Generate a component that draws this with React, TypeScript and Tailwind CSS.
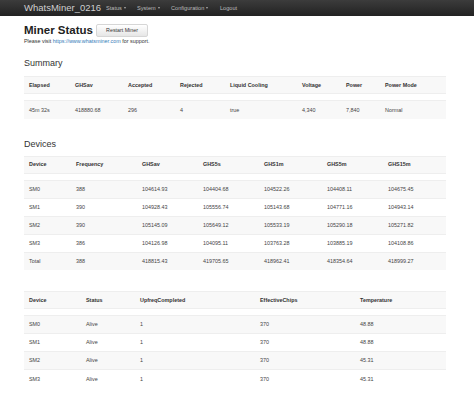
import React from "react";

type Table = {
  widths: number[];
  head: string[];
  rows: string[][];
};

const summary: Table = {
  widths: [46, 53, 52, 50, 72, 44, 39, 66],
  head: ["Elapsed", "GHSav", "Accepted", "Rejected", "Liquid Cooling", "Voltage", "Power", "Power Mode"],
  rows: [["45m 32s", "418880.68", "296", "4", "true", "4,340", "7,840", "Normal"]],
};

const devices: Table = {
  widths: [47, 66, 61, 61, 63, 61, 63],
  head: ["Device", "Frequency", "GHSav", "GHS5s", "GHS1m", "GHS5m", "GHS15m"],
  rows: [
    ["SM0", "388", "104614.93", "104404.68", "104522.26", "104408.11", "104675.45"],
    ["SM1", "390", "104928.43", "105556.74", "105143.68", "104771.16", "104943.14"],
    ["SM2", "390", "105145.09", "105649.12", "105533.19", "105290.18", "105271.82"],
    ["SM3", "386", "104126.98", "104095.11", "103763.28", "103885.19", "104108.86"],
    ["Total", "388", "418815.43", "419705.65", "418962.41", "418354.64", "418999.27"],
  ],
};

const chips: Table = {
  widths: [57, 54, 120, 100, 91],
  head: ["Device", "Status", "UpfreqCompleted", "EffectiveChips", "Temperature"],
  rows: [
    ["SM0", "Alive", "1", "370", "48.88"],
    ["SM1", "Alive", "1", "370", "48.88"],
    ["SM2", "Alive", "1", "370", "45.31"],
    ["SM3", "Alive", "1", "370", "45.31"],
  ],
};

function Caret() {
  return (
    <span className="ml-[2px] inline-block h-0 w-0 border-x-[1.5px] border-t-[2px] border-x-transparent border-t-[#aaa] align-middle" />
  );
}

function StripedTable({ table }: { table: Table }) {
  return (
    <table className="w-[422px] table-fixed border-collapse text-[5.4px] text-[#444]">
      <colgroup>
        {table.widths.map((w, i) => (
          <col key={i} style={{ width: w }} />
        ))}
      </colgroup>
      <tbody>
        <tr className="h-[17px] border-t border-[#eeeeee] bg-[#f8f8f8]">
          {table.head.map((h) => (
            <th key={h} className="pl-[5px] text-left font-bold text-[#333]">
              {h}
            </th>
          ))}
        </tr>
        <tr className="h-[7px] border-t border-[#eeeeee] bg-white">
          <td colSpan={table.head.length} />
        </tr>
        {table.rows.map((r, i) => (
          <tr
            key={i}
            className={`h-[18px] border-t border-[#eeeeee] ${i % 2 === 0 ? "bg-[#f8f8f8]" : "bg-white"}`}
          >
            {r.map((c, j) => (
              <td key={j} className="pl-[5px]">
                {c}
              </td>
            ))}
          </tr>
        ))}
      </tbody>
    </table>
  );
}

export default function App() {
  return (
    <div className="min-h-[401px] bg-white font-['Liberation_Sans',Arial,sans-serif] text-[#333]">
      <nav className="flex h-[16px] items-center bg-gradient-to-b from-[#3c3c3c] to-[#222] pl-[24px]">
        <span className="w-[82px] text-[9.5px] leading-none text-[#cfcfcf]">WhatsMiner_0216</span>
        <ul className="flex items-center text-[5.6px] text-[#bdbdbd]">
          <li className="w-[31px]">
            Status
            <Caret />
          </li>
          <li className="w-[34px]">
            System
            <Caret />
          </li>
          <li className="w-[49px]">
            Configuration
            <Caret />
          </li>
          <li>Logout</li>
        </ul>
      </nav>

      <main className="pl-[24px]">
        <div className="mt-[8px] flex items-center gap-[3px]">
          <h1 className="text-[11.5px] font-bold leading-none text-[#222]">Miner Status</h1>
          <button className="flex h-[13px] w-[52px] items-center justify-center rounded-[2px] border border-[#d6d6d6] bg-gradient-to-b from-white to-[#e6e6e6] text-[5.3px] text-[#333]">
            Restart Miner
          </button>
        </div>
        <p className="mt-[1px] text-[5.4px] leading-[7px]">
          Please visit <span className="text-[#337ab7]">https://www.whatsminer.com</span> for support.
        </p>

        <h3 className="mt-[13px] text-[9px] leading-[10px] text-[#333]">Summary</h3>
        <div className="mt-[8px]">
          <StripedTable table={summary} />
        </div>

        <h3 className="mt-[20px] text-[9px] leading-[10px] text-[#333]">Devices</h3>
        <div className="mt-[7px]">
          <StripedTable table={devices} />
        </div>

        <div className="mt-[21px]">
          <StripedTable table={chips} />
        </div>
      </main>
    </div>
  );
}
